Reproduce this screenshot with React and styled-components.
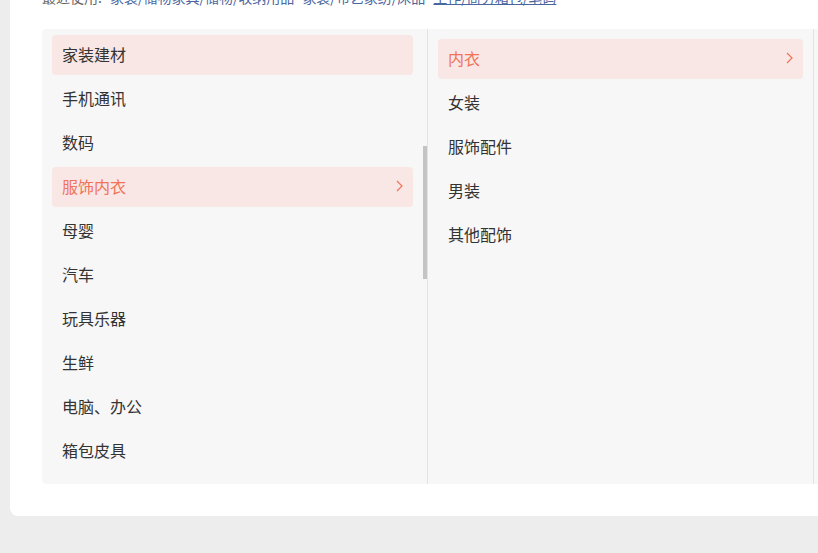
import React from "react";
import styled, { createGlobalStyle } from "styled-components";

const GlobalStyle = createGlobalStyle`
    html, body {
        margin: 0;
        padding: 0;
        background: #ededed;
        overflow: hidden;
        font-family: "Noto Sans CJK SC", "Liberation Sans", sans-serif;
    }
`;

const Page = styled.div`
    width: 818px;
    height: 553px;
    overflow: hidden;
    padding-left: 10px;
    box-sizing: border-box;
`;

const Card = styled.div`
    width: 1200px;
    margin-top: -33px;
    padding: 20px 32px 32px 32px;
    background: #fff;
    border-radius: 8px;
    box-sizing: border-box;
`;

const Recent = styled.div`
    font-size: 14px;
    line-height: 20px;
    height: 20px;
    color: #666;
    white-space: nowrap;
    margin-bottom: 22px;
    display: flex;
    gap: 8px;
`;

const RecentLink = styled.span`
    color: #4a66a0;
    text-decoration: ${({ $underline }) => ($underline ? "underline" : "none")};
`;

const Panel = styled.div`
    display: flex;
    height: 455px;
    background: #f7f7f7;
    border-radius: 4px;
    overflow: hidden;
`;

const Column = styled.div`
    position: relative;
    width: 386px;
    flex-shrink: 0;
    box-sizing: border-box;
    padding: ${({ $top }) => $top}px 14px 0 10px;
    border-right: 1px solid #e3e3e3;
    display: flex;
    flex-direction: column;
    gap: 4px;
    &:not(:first-child) {
        padding-right: 10px;
    }
`;

const Item = styled.div`
    height: 40px;
    flex-shrink: 0;
    display: flex;
    align-items: center;
    justify-content: space-between;
    padding: 0 10px 2px 10px;
    box-sizing: border-box;
    border-radius: 4px;
    font-size: 16px;
    color: ${({ $active }) => ($active ? "#f0735a" : "#333")};
    background: ${({ $active, $hover }) => ($active || $hover ? "#f9e7e5" : "transparent")};
`;

const Thumb = styled.div`
    position: absolute;
    right: 0;
    top: 117px;
    width: 4px;
    height: 133px;
    background: #c4c4c4;
`;

const Chevron = () => (
    <svg width="7" height="12" viewBox="0 0 7 12" fill="none">
        <path d="M1 1l5 5-5 5" stroke="#f0735a" strokeWidth="1.2" />
    </svg>
);

const first = ["家装建材", "手机通讯", "数码", "服饰内衣", "母婴", "汽车", "玩具乐器", "生鲜", "电脑、办公", "箱包皮具", "运动户外"];
const second = ["内衣", "女装", "服饰配件", "男装", "其他配饰"];
const third = ["文胸", "睡衣/家居服", "内裤"];

export default function App() {
    return (
        <Page>
            <GlobalStyle />
            <Card>
                <Recent>
                    <span>最近使用:</span>
                    <RecentLink>家装/储物家具/储物/收纳用品</RecentLink>
                    <RecentLink>家装/布艺家纺/床品</RecentLink>
                    <RecentLink $underline>工作/商务箱包/笔码</RecentLink>
                </Recent>
                <Panel>
                    <Column $top={6}>
                        {first.map((name, i) => (
                            <Item key={name} $active={i === 3} $hover={i === 0}>
                                {name}
                                {i === 3 && <Chevron />}
                            </Item>
                        ))}
                        <Thumb />
                    </Column>
                    <Column $top={10}>
                        {second.map((name, i) => (
                            <Item key={name} $active={i === 0}>
                                {name}
                                {i === 0 && <Chevron />}
                            </Item>
                        ))}
                    </Column>
                    <Column $top={10}>
                        {third.map((name) => (
                            <Item key={name}>{name}</Item>
                        ))}
                    </Column>
                </Panel>
            </Card>
        </Page>
    );
}
